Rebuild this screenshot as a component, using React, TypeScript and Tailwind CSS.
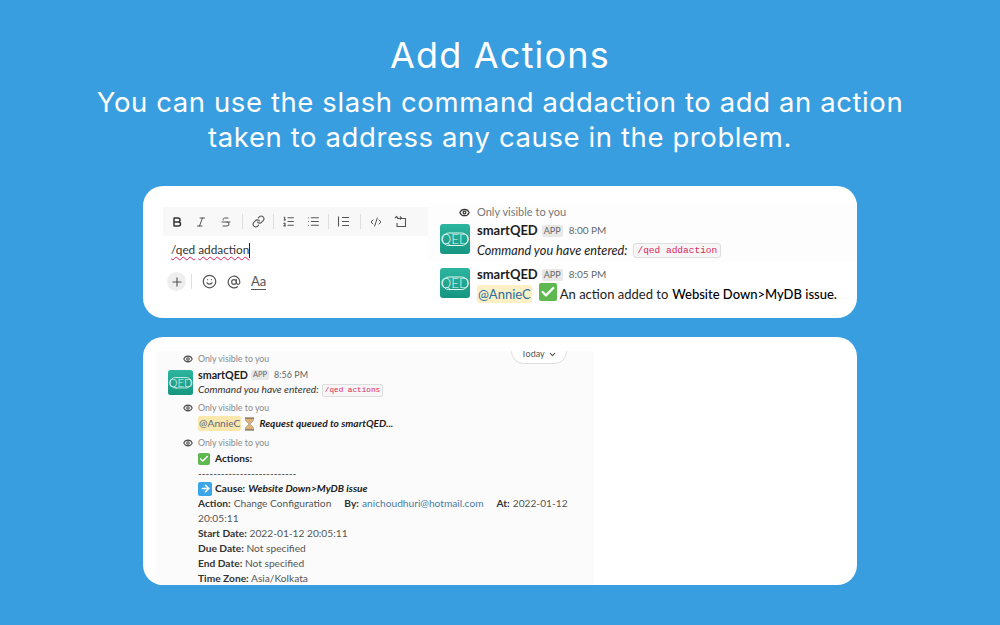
import { AtSign, Bold, ChevronDown, CodeXml, Eye, Italic, Link, List, ListOrdered, Plus, Smile, Strikethrough, Check, ArrowRight } from "lucide-react";

const slack = { fontFamily: "Lato, 'Open Sans', sans-serif" };

function QedLogo({ size }: { size: number }) {
  return (
    <svg width={size} height={size} viewBox="0 0 30 30" className="shrink-0">
      <defs>
        <linearGradient id="qed" x1="0" y1="0" x2="0" y2="1">
          <stop offset="0" stopColor="#2db59f" />
          <stop offset="1" stopColor="#169680" />
        </linearGradient>
      </defs>
      <rect width="30" height="30" rx="3" fill="url(#qed)" />
      <rect x="2.5" y="9" width="25.5" height="12.5" rx="6.2" fill="none" stroke="#e6f7f3" strokeWidth="1" />
      <text x="15" y="20" textAnchor="middle" fontSize="13.5" fill="#e6f7f3" fontFamily="Lato, sans-serif" fontWeight="300">
        QED
      </text>
    </svg>
  );
}

function CheckEmoji({ size }: { size: number }) {
  return (
    <span className="inline-flex shrink-0 items-center justify-center rounded-[2px] bg-[#5fb84f]" style={{ width: size, height: size }}>
      <Check size={size - 2} strokeWidth={3.5} className="text-white" />
    </span>
  );
}

function Sep() {
  return <span className="block h-[15px] w-px shrink-0 bg-[#dddddd]" />;
}

function Only({ small }: { small?: boolean }) {
  return small ? (
    <div className="flex h-[14px] items-center text-[8.8px] text-[#8a8a8a]">
      <Eye size={10} strokeWidth={2.6} className="ml-[15px] mr-[5px] text-[#444444]" />
      Only visible to you
    </div>
  ) : (
    <div className="flex h-[14px] items-center pl-[31px] text-[11px] text-[#777777]">
      <Eye size={11} strokeWidth={2.6} className="mr-[7px] text-[#333333]" />
      Only visible to you
    </div>
  );
}

function Editor() {
  return (
    <div className="w-[265px] shrink-0 text-[#555555]">
      <div className="flex h-[29px] items-center bg-[#f8f8f8] text-[#555555]">
        <Bold size={12} strokeWidth={3} className="ml-[8px] text-[#333333]" />
        <Italic size={12} className="ml-[12px]" />
        <Strikethrough size={12} className="ml-[13px]" />
        <span className="ml-[10px]"><Sep /></span>
        <Link size={13} className="ml-[9px]" />
        <span className="ml-[8px]"><Sep /></span>
        <ListOrdered size={13} className="ml-[8px]" />
        <List size={13} className="ml-[12px]" />
        <span className="ml-[8px]"><Sep /></span>
        <svg width="13" height="13" viewBox="0 0 13 13" fill="none" stroke="#555555" strokeWidth="1.1" className="ml-[8px]">
          <path d="M1.5 1.5V11.5M5 2.5H12M5 6.5H12M5 10.5H12" />
        </svg>
        <span className="ml-[10px]"><Sep /></span>
        <CodeXml size={12} className="ml-[9px]" />
        <svg width="13" height="13" viewBox="0 0 13 13" fill="none" stroke="#555555" strokeWidth="1.1" className="ml-[12px]">
          <path d="M3 3.5H11.5V11.5H3V8" />
          <path d="M1 3l1.5-1.5L4 3M6 1.5L7.5 3 6 4.5" />
        </svg>
      </div>
      <div className="flex h-[28px] items-center pl-[8px] text-[11.8px] text-[#333333]">
        <span className="underline decoration-[#e01e5a] decoration-wavy decoration-1 underline-offset-2">/qed</span>
        <span className="ml-[3px] underline decoration-[#e01e5a] decoration-wavy decoration-1 underline-offset-2">addaction</span>
        <span className="h-[15px] w-px bg-[#222222]" />
      </div>
      <div className="mt-[8px] flex items-center">
        <span className="ml-[4px] flex size-[19px] items-center justify-center rounded-full bg-[#eeeeee]">
          <Plus size={14} />
        </span>
        <span className="ml-[5px] h-[15px] w-px bg-[#dddddd]" />
        <Smile size={15} className="ml-[10px]" />
        <AtSign size={14} className="ml-[10px]" />
        <span className="ml-[10px] border-b border-[#555555] text-[13px] leading-[15px]">Aa</span>
      </div>
    </div>
  );
}

function SlackHead({ time, small }: { time: string; small?: boolean }) {
  return small ? (
    <div className="flex h-[14px] items-center">
      <span className="text-[10.7px] font-bold text-[#1d1c1d]">smartQED</span>
      <span className="ml-[3px] rounded-[2px] bg-[#e8e8e8] px-[2px] text-[7.5px] leading-[10px] text-[#666666]">APP</span>
      <span className="ml-[5px] text-[9px] text-[#666666]">{time}</span>
    </div>
  ) : (
    <div className="flex h-[17px] items-center">
      <span className="text-[13px] font-bold text-[#1d1c1d]">smartQED</span>
      <span className="ml-[4px] rounded-[2px] bg-[#e8e8e8] px-[2px] text-[9px] leading-[12px] text-[#666666]">APP</span>
      <span className="ml-[6px] text-[10px] text-[#666666]">{time}</span>
    </div>
  );
}

function TopMessages() {
  return (
    <div className="flex-1 pl-[12px]">
      <div className="-ml-[12px] h-[59px] bg-[#fdfdfd] pt-[2px]">
        <Only />
        <div className="mt-[5px] flex pl-[12px]">
          <QedLogo size={30} />
          <div className="-mt-[2px] ml-[7px]">
            <SlackHead time="8:00 PM" />
            <div className="mt-[2px] flex items-center text-[12.7px] italic text-[#222222]">
              Command you have entered:
              <code className="ml-[6px] rounded-[3px] border border-[#dddddd] bg-[#f6f6f6] px-[3px] font-['Liberation_Mono'] text-[9.5px] not-italic leading-[13px] text-[#e01e5a]">
                /qed addaction
              </code>
            </div>
          </div>
        </div>
      </div>
      <div className="mt-[6px] flex">
        <QedLogo size={30} />
        <div className="-mt-[2px] ml-[7px]">
          <SlackHead time="8:05 PM" />
          <div className="flex items-center text-[13px] leading-[18px] text-[#222222]">
            <span className="rounded-[2px] bg-[#fdf0c4] px-[1px] text-[#2a6ea8]">@AnnieC</span>
            <span className="ml-[7px]"><CheckEmoji size={18} /></span>
            <span className="ml-[3px]">An action added to</span>
            <span className="ml-[4px] font-medium text-black">Website Down&gt;MyDB issue.</span>
          </div>
        </div>
      </div>
    </div>
  );
}

function Field({ label, value }: { label: string; value: string }) {
  return (
    <div className="h-[15px] leading-[15px]">
      <span className="font-bold text-[#333333]">{label}:</span> <span className="text-[#555555]">{value}</span>
    </div>
  );
}

function BottomMessages() {
  return (
    <div className="relative h-[234px] w-[438px] overflow-hidden bg-[#fbfbfb]" style={slack}>
      <div className="absolute right-[27px] top-[-12px] flex h-[25px] w-[56px] items-center justify-center rounded-full border border-[#dddddd] bg-white pt-[5px] text-[9px] text-[#555555]">
        Today
        <ChevronDown size={9} strokeWidth={3} className="ml-[3px]" />
      </div>
      <div className="pt-[1px]">
        <div className="pl-[12px]"><Only small /></div>
        <div className="mt-[4px] flex pl-[12px]">
          <QedLogo size={25} />
          <div className="-mt-[2px] ml-[5px] text-[10.2px]">
            <SlackHead time="8:56 PM" small />
            <div className="mt-[1px] flex h-[14px] items-center italic text-[#333333]">
              Command you have entered:
              <code className="ml-[3px] rounded-[2px] border border-[#dddddd] bg-[#f6f6f6] px-[2px] font-['Liberation_Mono'] text-[7.7px] not-italic leading-[11px] text-[#e01e5a]">
                /qed actions
              </code>
            </div>
          </div>
        </div>
        <div className="mt-[4px] pl-[12px]"><Only small /></div>
        <div className="mt-[1px] flex h-[15px] items-center pl-[42px] text-[10.2px]">
          <span className="rounded-[2px] bg-[#fbe8ae] px-[1px] text-[#556b80]">@AnnieC</span>
          <svg width="11" height="14" viewBox="0 0 11 14" className="ml-[3px]">
            <path d="M1.5 1.5h8v2L6 7l3.5 3.5v2h-8v-2L5 7 1.5 3.5z" fill="#e2b070" stroke="#9a9a9a" strokeWidth="0.7" />
            <path d="M1 1h9M1 13h9" stroke="#6b5a45" strokeWidth="1.2" />
          </svg>
          <span className="ml-[4px] font-bold italic text-[#1d1c1d]">Request queued to smartQED...</span>
        </div>
        <div className="mt-[5px] pl-[12px]"><Only small /></div>
        <div className="mt-[1px] w-[416px] pl-[42px] text-[10.2px]">
          <div className="flex h-[15px] items-center font-bold text-[#222222]">
            <CheckEmoji size={12} />
            <span className="ml-[5px]">Actions:</span>
          </div>
          <div className="h-[15px] overflow-hidden leading-[15px] text-[#333333]">--------------------------</div>
          <div className="flex h-[15px] items-center text-[#222222]">
            <span className="flex h-[14px] w-[14px] items-center justify-center rounded-[2px] bg-[#3aa5e8]">
              <ArrowRight size={11} strokeWidth={3.5} className="text-white" />
            </span>
            <span className="ml-[3px] font-bold">Cause:</span>
            <span className="ml-[3px] font-bold italic">Website Down&gt;MyDB issue</span>
          </div>
          <div className="flex h-[15px] items-center whitespace-nowrap">
            <span className="font-bold text-[#333333]">Action:</span>
            <span className="ml-[3px] text-[#555555]">Change Configuration</span>
            <span className="ml-[13px] font-bold text-[#333333]">By:</span>
            <span className="ml-[3px] text-[#4a7ba8]">anichoudhuri@hotmail.com</span>
            <span className="ml-[13px] font-bold text-[#333333]">At:</span>
            <span className="ml-[3px] text-[#555555]">2022-01-12</span>
          </div>
          <div className="h-[15px] leading-[15px] text-[#555555]">20:05:11</div>
          <Field label="Start Date" value="2022-01-12 20:05:11" />
          <Field label="Due Date" value="Not specified" />
          <Field label="End Date" value="Not specified" />
          <Field label="Time Zone" value="Asia/Kolkata" />
        </div>
      </div>
    </div>
  );
}

export default function App() {
  return (
    <div className="h-[625px] w-[1000px] overflow-hidden bg-[#389ee0] pt-[32px] text-center text-white" style={{ fontFamily: "Inter, sans-serif" }}>
      <h1 className="text-[36px] leading-[46px] font-normal tracking-[1.2px]">Add Actions</h1>
      <p className="mt-[7px] text-[27.5px] leading-[35px] tracking-[0.6px]">
        You can use the slash command addaction to add an action
        <br />
        taken to address any cause in the problem.
      </p>
      <div className="mx-auto mt-[31px] w-[714px] text-left text-[#1d1c1d]">
        <div className="flex h-[132px] rounded-[20px] bg-white pl-[20px] pt-[21px]" style={slack}>
          <Editor />
          <div className="-mt-[4px] flex-1">
            <TopMessages />
          </div>
        </div>
        <div className="mt-[19px] h-[248px] overflow-hidden rounded-[20px] bg-white pl-[13px] pt-[14px]">
          <BottomMessages />
        </div>
      </div>
    </div>
  );
}
